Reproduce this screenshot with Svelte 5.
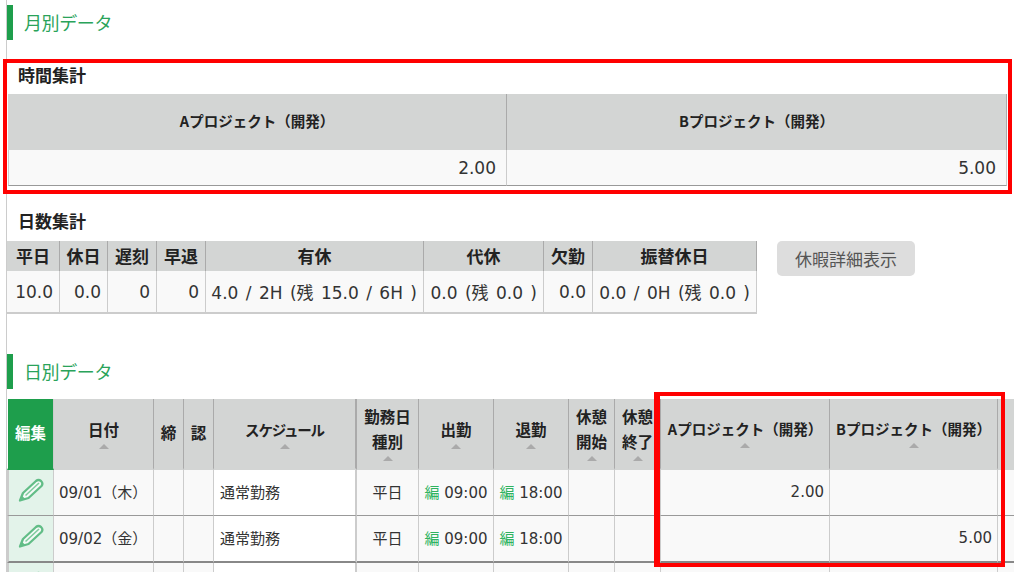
<script lang="ts">
	const dayCols = [53, 48, 49, 49, 218, 120, 49, 164];
	const dayHead = ['平日', '休日', '遅刻', '早退', '有休', '代休', '欠勤', '振替休日'];
	const dayBody = ['10.0', '0.0', '0', '0', '4.0 / 2H (残 15.0 / 6H )', '0.0 (残 0.0 )', '0.0', '0.0 / 0H (残 0.0 )'];

	const dailyCols = [47, 100, 30, 30, 143, 62, 75, 75, 46, 46, 169, 168, 60];
	const rows = [
		{ date: '09/01（木）', a: '2.00', b: '' },
		{ date: '09/02（金）', a: '', b: '5.00' }
	];
</script>

{#snippet pencil()}
	<svg class="pencil" viewBox="0 0 26 24" width="26" height="24" aria-hidden="true">
		<path d="M2 22.5 L5 15 L18 3 Q20.5 1 23 3 Q25.5 5.5 23.5 8 L10.5 20 Z" fill="#fff" fill-opacity="0.6" stroke="#62bd87" stroke-width="2.3" stroke-linejoin="round" />
		<path d="M7.5 17.5 L21 5" fill="none" stroke="#7fcb9e" stroke-width="1.6" />
		<path d="M2 22.5 L3.6 17.5 L7.5 21 Z" fill="#62bd87" />
	</svg>
{/snippet}

{#snippet sort()}
	<span class="sort"></span>
{/snippet}

<div class="page">
	<div class="content">
		<h2 class="section">月別データ</h2>

		<h3 class="sub first">時間集計</h3>
		<table class="time">
			<colgroup>
				<col style="width: 499px" />
				<col style="width: 500px" />
			</colgroup>
			<thead>
				<tr>
					<th>Aプロジェクト（開発）</th>
					<th>Bプロジェクト（開発）</th>
				</tr>
			</thead>
			<tbody>
				<tr>
					<td>2.00</td>
					<td>5.00</td>
				</tr>
			</tbody>
		</table>

		<h3 class="sub second">日数集計</h3>
		<div class="days-row">
			<table class="days">
				<colgroup>
					{#each dayCols as w}
						<col style="width: {w}px" />
					{/each}
				</colgroup>
				<thead>
					<tr>
						{#each dayHead as h}
							<th>{h}</th>
						{/each}
					</tr>
				</thead>
				<tbody>
					<tr>
						{#each dayBody as v}
							<td>{v}</td>
						{/each}
					</tr>
				</tbody>
			</table>
			<button class="detail" type="button">休暇詳細表示</button>
		</div>

		<h2 class="section daily-title">日別データ</h2>

		<table class="daily">
			<colgroup>
				{#each dailyCols as w}
					<col style="width: {w}px" />
				{/each}
			</colgroup>
			<thead>
				<tr>
					<th class="edit">編集</th>
					<th>日付{@render sort()}</th>
					<th>締</th>
					<th>認</th>
					<th class="thick"><span class="kana">スケジュール</span>{@render sort()}</th>
					<th>勤務日<br />種別{@render sort()}</th>
					<th>出勤{@render sort()}</th>
					<th>退勤{@render sort()}</th>
					<th>休憩<br />開始{@render sort()}</th>
					<th>休憩<br />終了{@render sort()}</th>
					<th class="project">Aプロジェクト（開発）{@render sort()}</th>
					<th class="project">Bプロジェクト（開発）{@render sort()}</th>
					<th></th>
				</tr>
			</thead>
			<tbody>
				{#each rows as row}
					<tr>
						<td class="edit-cell">{@render pencil()}</td>
						<td class="date">{row.date}</td>
						<td></td>
						<td></td>
						<td class="schedule">通常勤務</td>
						<td class="center">平日</td>
						<td class="center"><span class="mark">編</span> 09:00</td>
						<td class="center"><span class="mark">編</span> 18:00</td>
						<td></td>
						<td></td>
						<td class="num">{row.a}</td>
						<td class="num">{row.b}</td>
						<td></td>
					</tr>
				{/each}
				<tr>
					<td class="edit-cell">{@render pencil()}</td>
					<td></td>
					<td></td>
					<td></td>
					<td class="schedule"></td>
					<td></td>
					<td></td>
					<td></td>
					<td></td>
					<td></td>
					<td></td>
					<td></td>
					<td></td>
				</tr>
			</tbody>
		</table>
	</div>

	<div class="callout callout-monthly"></div>
	<div class="callout callout-daily"></div>
</div>

<style>
	:global(body) {
		margin: 0;
		background: #fff;
	}
	.page {
		position: relative;
		height: 572px;
		overflow: hidden;
		font-family: "DejaVu Sans", "Noto Sans CJK JP", sans-serif;
		color: #222;
	}
	.content {
		margin-left: 6px;
		height: 572px;
		border-left: 1px solid #ccc;
		padding-top: 5px;
		box-sizing: border-box;
	}
	.section {
		margin: 0;
		height: 35px;
		line-height: 35px;
		border-left: 6px solid #1e9e4c;
		padding-left: 11px;
		font-family: "Noto Sans CJK JP", sans-serif;
		font-size: 18px;
		font-weight: 400;
		letter-spacing: -0.4px;
		color: #2aa35a;
		box-sizing: border-box;
	}
	.daily-title {
		margin-top: 40px;
	}
	.sub {
		margin: 0;
		padding-left: 11px;
		font-family: "Noto Sans CJK JP", sans-serif;
		font-size: 17px;
		line-height: 24px;
		font-weight: 700;
		color: #222;
	}
	.sub.first {
		margin-top: 23px;
		margin-bottom: 7px;
	}
	.sub.second {
		margin-top: 23px;
		margin-bottom: 8px;
	}
	table {
		border-collapse: separate;
		border-spacing: 0;
		table-layout: fixed;
	}
	th {
		background: #d3d5d4;
		font-family: "Noto Sans CJK JP", sans-serif;
		font-weight: 700;
		color: #222;
		padding: 0;
		text-align: center;
		box-sizing: border-box;
	}
	td {
		background: #f9f9f9;
		padding: 0;
		box-sizing: border-box;
	}

	/* 時間集計 */
	.time {
		width: 999px;
		margin-left: 1px;
	}
	.time th {
		height: 56px;
		font-size: 14.5px;
		padding-bottom: 3px;
		border-right: 1px solid #aaa;
	}
	.time td {
		height: 36px;
		font-size: 17px;
		text-align: right;
		padding-right: 10px;
		border-right: 1px solid #ccc;
		border-bottom: 1px solid #999;
		color: #333;
	}
	.time td:first-child {
		border-left: 1px solid #ccc;
	}

	/* 日数集計 */
	.days-row {
		display: flex;
		align-items: flex-start;
		gap: 20px;
	}
	.days {
		width: 750px;
	}
	.days th {
		height: 30px;
		font-size: 17px;
		padding-bottom: 2px;
		border-right: 1px solid #aaa;
		line-height: 1;
	}
	.days td {
		height: 43px;
		font-size: 17px;
		word-spacing: 2px;
		text-align: right;
		padding-right: 6px;
		white-space: nowrap;
		border-right: 1px solid #ccc;
		border-bottom: 2px solid #ccc;
		color: #333;
	}
	.detail {
		width: 138px;
		height: 35px;
		border: 0;
		border-radius: 5px;
		background: #ddd;
		color: #555;
		font-family: "Noto Sans CJK JP", sans-serif;
		font-size: 17px;
		padding: 0;
	}

	/* 日別データ */
	.daily {
		width: 1051px;
		margin-top: 10px;
	}
	.daily th {
		height: 71px;
		font-size: 15.5px;
		line-height: 25px;
		padding-bottom: 2px;
		border-right: 1px solid #aaa;
		border-bottom: 2px solid #d3d5d4;
	}
	.daily th.thick {
		border-right-width: 2px;
	}
	.kana {
		font-size: 14.5px;
		letter-spacing: -1.2px;
	}
	.daily th.project {
		font-size: 14.5px;
		padding-bottom: 3px;
	}
	.daily th.edit {
		background: #1e9e4c;
		color: #fff;
		border-left: 1px solid #fff;
		border-bottom-color: #1e9e4c;
		border-right: 1px solid #ccc;
	}
	.sort {
		display: block;
		width: 0;
		height: 0;
		margin: 2px auto 0;
		border-left: 5.5px solid transparent;
		border-right: 5.5px solid transparent;
		border-bottom: 5px solid #aaa;
	}
	.daily td {
		height: 46px;
		font-size: 15px;
		padding-bottom: 2px;
		border-right: 1px solid #ccc;
		border-bottom: 1px solid #999;
		color: #333;
		white-space: nowrap;
	}
	.daily tr:nth-child(2) td {
		height: 47px;
		border-bottom: 2px solid #888;
	}
	.daily td.edit-cell {
		background: #e3f3ea;
		border-left: 2px solid #ccc;
		text-align: center;
	}
	.pencil {
		display: block;
		margin: 0 auto 4px;
	}
	.daily td.date {
		padding-left: 5px;
	}
	.daily td.schedule {
		background: #fff;
		padding-left: 6px;
		border-right-width: 2px;
	}
	.daily td.center {
		text-align: center;
	}
	.daily td.num {
		text-align: right;
		padding-right: 5px;
	}
	.mark {
		color: #2fb35f;
	}

	/* 赤枠の注釈 */
	.callout {
		position: absolute;
		box-sizing: border-box;
		border: 4px solid #f00;
		pointer-events: none;
	}
	.callout-monthly {
		left: 3px;
		top: 59px;
		width: 1009px;
		height: 135px;
	}
	.callout-daily {
		left: 654px;
		top: 392px;
		width: 351px;
		height: 175px;
		border-left-width: 6px;
	}
</style>
